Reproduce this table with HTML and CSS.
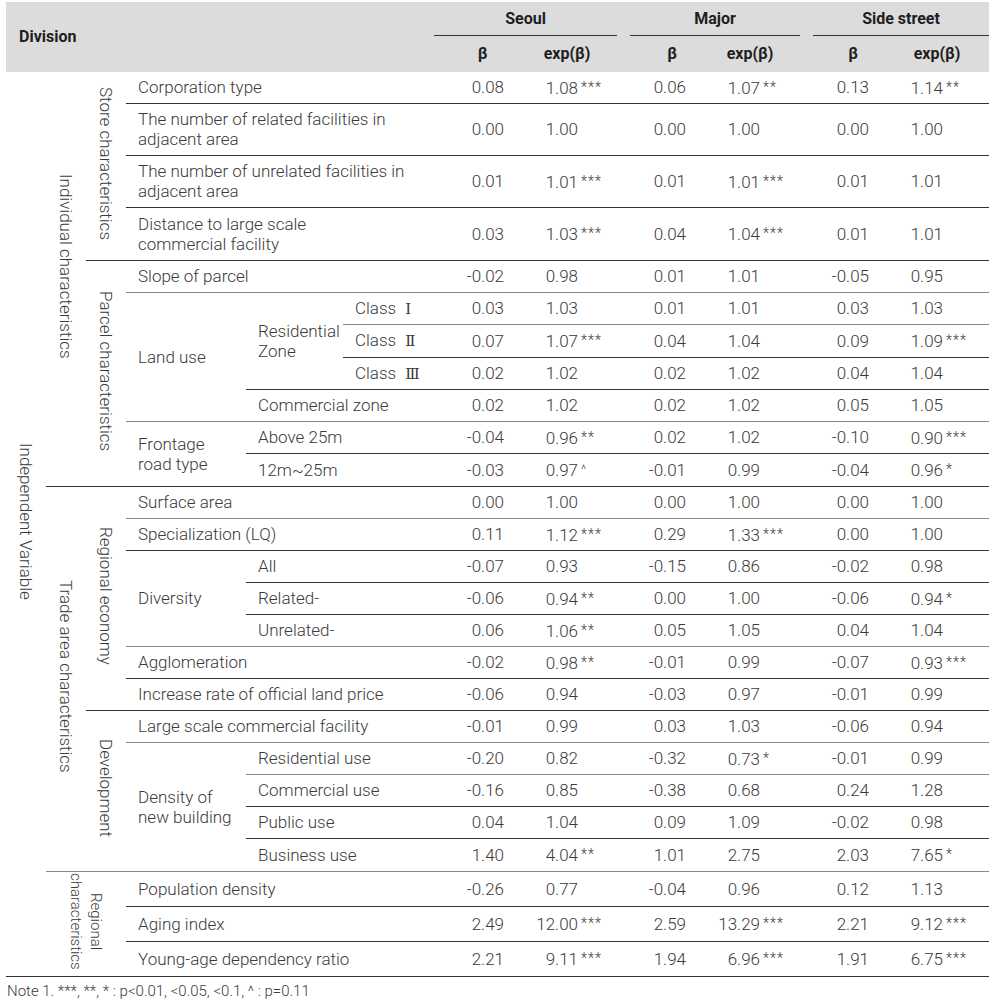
FILE: index.html
```html
<!DOCTYPE html>
<html>
<head>
<meta charset="utf-8">
<link rel="stylesheet" href="styles.css">
</head>
<body>
<table class="tbl">
<colgroup>
<col class="c-a"><col class="c-b"><col class="c-c"><col class="c-d"><col class="c-e"><col class="c-f">
<col class="c-sb"><col class="c-se"><col class="c-mb"><col class="c-me"><col class="c-xb"><col class="c-xe">
</colgroup>
<thead>
<tr class="h1">
<th colspan="6" rowspan="2" class="div-h">Division</th>
<th colspan="2" class="grp"><div class="grp-in g-s">Seoul</div></th>
<th colspan="2" class="grp"><div class="grp-in g-m">Major</div></th>
<th colspan="2" class="grp"><div class="grp-in g-x">Side street</div></th>
</tr>
<tr class="h2">
<th class="hb hb-s">β</th><th class="he he-s">exp(β)</th>
<th class="hb hb-m">β</th><th class="he he-m">exp(β)</th>
<th class="hb hb-x">β</th><th class="he he-x">exp(β)</th>
</tr>
</thead>
<tbody>
<tr class="r31 first">
<td rowspan="26" class="v"><div class="vt">Independent Variable</div></td>
<td rowspan="11" class="v"><div class="vt vt-ind">Individual characteristics</div></td>
<td rowspan="4" class="v"><div class="vt">Store characteristics</div></td>
<td colspan="3" class="lb">Corporation type</td>
<td class="b">0.08</td><td class="e"><span class="n">1.08</span><span class="s">***</span></td>
<td class="b">0.06</td><td class="e"><span class="n">1.07</span><span class="s">**</span></td>
<td class="b">0.13</td><td class="e"><span class="n">1.14</span><span class="s">**</span></td>
</tr>
<tr class="r52">
<td colspan="3" class="lb">The number of related facilities in<br>adjacent area</td>
<td class="b">0.00</td><td class="e"><span class="n">1.00</span></td>
<td class="b">0.00</td><td class="e"><span class="n">1.00</span></td>
<td class="b">0.00</td><td class="e"><span class="n">1.00</span></td>
</tr>
<tr class="r52">
<td colspan="3" class="lb">The number of unrelated facilities in<br>adjacent area</td>
<td class="b">0.01</td><td class="e"><span class="n">1.01</span><span class="s">***</span></td>
<td class="b">0.01</td><td class="e"><span class="n">1.01</span><span class="s">***</span></td>
<td class="b">0.01</td><td class="e"><span class="n">1.01</span></td>
</tr>
<tr class="r53">
<td colspan="3" class="lb">Distance to large scale<br>commercial facility</td>
<td class="b">0.03</td><td class="e"><span class="n">1.03</span><span class="s">***</span></td>
<td class="b">0.04</td><td class="e"><span class="n">1.04</span><span class="s">***</span></td>
<td class="b">0.01</td><td class="e"><span class="n">1.01</span></td>
</tr>
<tr>
<td rowspan="7" class="v"><div class="vt">Parcel characteristics</div></td>
<td colspan="3" class="lb">Slope of parcel</td>
<td class="b">-0.02</td><td class="e"><span class="n">0.98</span></td>
<td class="b">0.01</td><td class="e"><span class="n">1.01</span></td>
<td class="b">-0.05</td><td class="e"><span class="n">0.95</span></td>
</tr>
<tr class="lt">
<td rowspan="4" class="lb">Land use</td>
<td rowspan="3" class="lb">Residential<br>Zone</td>
<td class="lb">Class <span class="rn">Ⅰ</span></td>
<td class="b">0.03</td><td class="e"><span class="n">1.03</span></td>
<td class="b">0.01</td><td class="e"><span class="n">1.01</span></td>
<td class="b">0.03</td><td class="e"><span class="n">1.03</span></td>
</tr>
<tr class="lt r33">
<td class="lb">Class <span class="rn">Ⅱ</span></td>
<td class="b">0.07</td><td class="e"><span class="n">1.07</span><span class="s">***</span></td>
<td class="b">0.04</td><td class="e"><span class="n">1.04</span></td>
<td class="b">0.09</td><td class="e"><span class="n">1.09</span><span class="s">***</span></td>
</tr>
<tr>
<td class="lb">Class <span class="rn">Ⅲ</span></td>
<td class="b">0.02</td><td class="e"><span class="n">1.02</span></td>
<td class="b">0.02</td><td class="e"><span class="n">1.02</span></td>
<td class="b">0.04</td><td class="e"><span class="n">1.04</span></td>
</tr>
<tr>
<td colspan="2" class="lb">Commercial zone</td>
<td class="b">0.02</td><td class="e"><span class="n">1.02</span></td>
<td class="b">0.02</td><td class="e"><span class="n">1.02</span></td>
<td class="b">0.05</td><td class="e"><span class="n">1.05</span></td>
</tr>
<tr class="lt">
<td rowspan="2" class="lb">Frontage<br>road type</td>
<td colspan="2" class="lb">Above 25m</td>
<td class="b">-0.04</td><td class="e"><span class="n">0.96</span><span class="s">**</span></td>
<td class="b">0.02</td><td class="e"><span class="n">1.02</span></td>
<td class="b">-0.10</td><td class="e"><span class="n">0.90</span><span class="s">***</span></td>
</tr>
<tr class="r33">
<td colspan="2" class="lb">12m~25m</td>
<td class="b">-0.03</td><td class="e"><span class="n">0.97</span><span class="s car">^</span></td>
<td class="b">-0.01</td><td class="e"><span class="n">0.99</span></td>
<td class="b">-0.04</td><td class="e"><span class="n">0.96</span><span class="s">*</span></td>
</tr>
<tr>
<td rowspan="12" class="v"><div class="vt">Trade area characteristics</div></td>
<td rowspan="7" class="v"><div class="vt">Regional economy</div></td>
<td colspan="3" class="lb">Surface area</td>
<td class="b">0.00</td><td class="e"><span class="n">1.00</span></td>
<td class="b">0.00</td><td class="e"><span class="n">1.00</span></td>
<td class="b">0.00</td><td class="e"><span class="n">1.00</span></td>
</tr>
<tr class="lt">
<td colspan="3" class="lb">Specialization (LQ)</td>
<td class="b">0.11</td><td class="e"><span class="n">1.12</span><span class="s">***</span></td>
<td class="b">0.29</td><td class="e"><span class="n">1.33</span><span class="s">***</span></td>
<td class="b">0.00</td><td class="e"><span class="n">1.00</span></td>
</tr>
<tr>
<td rowspan="3" class="lb">Diversity</td>
<td colspan="2" class="lb">All</td>
<td class="b">-0.07</td><td class="e"><span class="n">0.93</span></td>
<td class="b">-0.15</td><td class="e"><span class="n">0.86</span></td>
<td class="b">-0.02</td><td class="e"><span class="n">0.98</span></td>
</tr>
<tr>
<td colspan="2" class="lb">Related-</td>
<td class="b">-0.06</td><td class="e"><span class="n">0.94</span><span class="s">**</span></td>
<td class="b">0.00</td><td class="e"><span class="n">1.00</span></td>
<td class="b">-0.06</td><td class="e"><span class="n">0.94</span><span class="s">*</span></td>
</tr>
<tr>
<td colspan="2" class="lb">Unrelated-</td>
<td class="b">0.06</td><td class="e"><span class="n">1.06</span><span class="s">**</span></td>
<td class="b">0.05</td><td class="e"><span class="n">1.05</span></td>
<td class="b">0.04</td><td class="e"><span class="n">1.04</span></td>
</tr>
<tr class="lt">
<td colspan="3" class="lb">Agglomeration</td>
<td class="b">-0.02</td><td class="e"><span class="n">0.98</span><span class="s">**</span></td>
<td class="b">-0.01</td><td class="e"><span class="n">0.99</span></td>
<td class="b">-0.07</td><td class="e"><span class="n">0.93</span><span class="s">***</span></td>
</tr>
<tr>
<td colspan="3" class="lb">Increase rate of official land price</td>
<td class="b">-0.06</td><td class="e"><span class="n">0.94</span></td>
<td class="b">-0.03</td><td class="e"><span class="n">0.97</span></td>
<td class="b">-0.01</td><td class="e"><span class="n">0.99</span></td>
</tr>
<tr>
<td rowspan="5" class="v"><div class="vt">Development</div></td>
<td colspan="3" class="lb">Large scale commercial facility</td>
<td class="b">-0.01</td><td class="e"><span class="n">0.99</span></td>
<td class="b">0.03</td><td class="e"><span class="n">1.03</span></td>
<td class="b">-0.06</td><td class="e"><span class="n">0.94</span></td>
</tr>
<tr class="lt">
<td rowspan="4" class="lb">Density of<br>new building</td>
<td colspan="2" class="lb">Residential use</td>
<td class="b">-0.20</td><td class="e"><span class="n">0.82</span></td>
<td class="b">-0.32</td><td class="e"><span class="n">0.73</span><span class="s">*</span></td>
<td class="b">-0.01</td><td class="e"><span class="n">0.99</span></td>
</tr>
<tr class="lt">
<td colspan="2" class="lb">Commercial use</td>
<td class="b">-0.16</td><td class="e"><span class="n">0.85</span></td>
<td class="b">-0.38</td><td class="e"><span class="n">0.68</span></td>
<td class="b">0.24</td><td class="e"><span class="n">1.28</span></td>
</tr>
<tr>
<td colspan="2" class="lb">Public use</td>
<td class="b">0.04</td><td class="e"><span class="n">1.04</span></td>
<td class="b">0.09</td><td class="e"><span class="n">1.09</span></td>
<td class="b">-0.02</td><td class="e"><span class="n">0.98</span></td>
</tr>
<tr class="r33">
<td colspan="2" class="lb">Business use</td>
<td class="b">1.40</td><td class="e"><span class="n">4.04</span><span class="s">**</span></td>
<td class="b">1.01</td><td class="e"><span class="n">2.75</span></td>
<td class="b">2.03</td><td class="e"><span class="n">7.65</span><span class="s">*</span></td>
</tr>
<tr class="lt r35">
<td rowspan="3" colspan="2" class="v"><div class="vt vt2">Regional<br>characteristics</div></td>
<td colspan="3" class="lb">Population density</td>
<td class="b">-0.26</td><td class="e"><span class="n">0.77</span></td>
<td class="b">-0.04</td><td class="e"><span class="n">0.96</span></td>
<td class="b">0.12</td><td class="e"><span class="n">1.13</span></td>
</tr>
<tr class="r35">
<td colspan="3" class="lb">Aging index</td>
<td class="b">2.49</td><td class="e"><span class="n">12.00</span><span class="s">***</span></td>
<td class="b">2.59</td><td class="e"><span class="n">13.29</span><span class="s">***</span></td>
<td class="b">2.21</td><td class="e"><span class="n">9.12</span><span class="s">***</span></td>
</tr>
<tr class="r35">
<td colspan="3" class="lb">Young-age dependency ratio</td>
<td class="b">2.21</td><td class="e"><span class="n">9.11</span><span class="s">***</span></td>
<td class="b">1.94</td><td class="e"><span class="n">6.96</span><span class="s">***</span></td>
<td class="b">1.91</td><td class="e"><span class="n">6.75</span><span class="s">***</span></td>
</tr>
</tbody>
</table>
<p class="note">Note 1. ***, **, * : p&lt;0.01, &lt;0.05, &lt;0.1, ^ : p=0.11</p>
</body>
</html>
```

FILE: styles.css
```css
html, body {
  margin: 0;
  padding: 0;
  background: #ffffff;
}

body {
  font-family: Roboto, "Noto Sans", "Liberation Sans", sans-serif;
  color: #3a3a3a;
}

.tbl {
  border-collapse: collapse;
  table-layout: fixed;
  width: 983px;
  margin: 2px 0 0 6px;
  font-size: 17px;
  font-weight: 300;
  line-height: 20px;
  border-bottom: 1px solid #333;
}

.c-a { width: 40px; }
.c-b { width: 40px; }
.c-c { width: 40px; }
.c-d { width: 120px; }
.c-e { width: 97px; }
.c-f { width: 91px; }
.c-sb { width: 95px; }
.c-se { width: 94px; }
.c-mb { width: 88px; }
.c-me { width: 95px; }
.c-xb { width: 88px; }
.c-xe { width: 95px; }

thead th {
  background: #dcdcdc;
  color: #1e1e1e;
  font-weight: 700;
  font-size: 16px;
  padding: 0;
}

.h1 { height: 34px; }
.h2 { height: 36px; }

.div-h {
  text-align: left;
  padding-left: 13px;
  vertical-align: middle;
}

.grp {
  vertical-align: bottom;
}

.grp-in {
  border-bottom: 1px solid #333;
  padding-bottom: 6px;
  text-align: center;
}

.g-s { margin-right: 6px; }
.g-m { margin-left: 7px; margin-right: 6px; }
.g-x { margin-left: 7px; }

.hb, .he {
  vertical-align: middle;
  text-align: center;
}

.hb-s { padding-left: 2px; }
.he-s { padding-right: 18px; }
.hb-m { padding-left: 10px; }
.he-m { padding-right: 17px; }
.hb-x { padding-left: 6px; }
.he-x { padding-right: 9px; }

tbody td {
  border-top: 1px solid #333;
  padding: 0;
  vertical-align: middle;
}

tbody tr.first td { border-top: none; }

tbody tr.lt td { border-top-color: #8a8a8a; }

tbody tr { height: 32px; }
tbody tr.r31 { height: 31px; }
tbody tr.r33 { height: 33px; }
tbody tr.r35 { height: 35px; }
tbody tr.r52 { height: 52px; }
tbody tr.r53 { height: 53px; }

.v {
  text-align: center;
}

.vt {
  display: inline-block;
  writing-mode: vertical-rl;
  white-space: nowrap;
}

.vt-ind { margin-bottom: 20px; }

.vt2 {
  font-size: 15px;
  line-height: 20px;
}

.lb {
  padding-left: 12px;
  text-align: left;
}

.rn {
  font-family: "DejaVu Serif", "Liberation Serif", serif;
  font-size: 15px;
  margin-left: 5px;
}

.b {
  text-align: right;
  padding-right: 25px;
}

.e {
  text-align: left;
  white-space: nowrap;
}

.n {
  display: inline-block;
  width: 49px;
  text-align: right;
}

.s {
  font-size: 14px;
  margin-left: 3px;
  letter-spacing: 1px;
  vertical-align: 2px;
}

.car {
  font-size: 12px;
}

.note {
  margin: 4px 0 0 7px;
  font-size: 15px;
  font-weight: 300;
  color: #3a3a3a;
  line-height: 20px;
}
```
